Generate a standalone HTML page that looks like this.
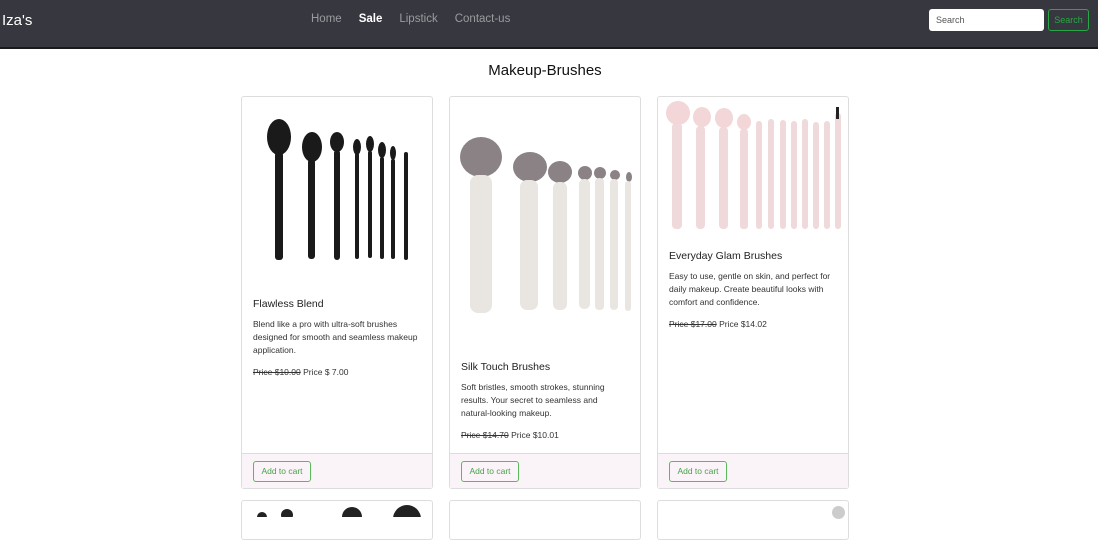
<!DOCTYPE html>
<html><head><style>
*{box-sizing:border-box;margin:0;padding:0}
body{width:1100px;height:516px;overflow:hidden;background:#fff;font-family:"Liberation Sans",sans-serif;color:#212529;position:relative}
.nav{position:absolute;left:0;top:0;width:1098px;height:49px;background:#37383f;border-bottom:2px solid #1a1a1a}
.brand{position:absolute;left:2px;top:12px;color:#fff;font-size:15px}
.links{position:absolute;left:311px;top:13px;font-size:11.5px;color:#9a9ba0}
.links span{margin-right:17px}
.links .a{color:#fff;font-weight:bold}
.srch{position:absolute;left:929px;top:9px;width:115px;height:22px;background:#fff;border-radius:3px;font-size:9px;color:#555;padding:6px 7px}
.btn{position:absolute;left:1048px;top:9px;width:41px;height:22px;border:1px solid #28a745;border-radius:3px;color:#28a745;font-size:9px;text-align:center;line-height:20px}
h1{position:absolute;left:0;width:1090px;top:62px;text-align:center;font-size:15px;font-weight:normal;color:#111}
.card{position:absolute;width:192px;border:1px solid #ddd;border-radius:3px;background:#fff}
.card .t{position:absolute;left:11px;font-size:10.5px;color:#222}
.card .d{position:absolute;left:11px;width:170px;font-size:8.5px;line-height:13px;color:#333}
.card .p{position:absolute;left:11px;font-size:8.5px;color:#333}
.ft{position:absolute;left:0;right:0;bottom:0;height:35px;background:#faf4f8;border-top:1px solid #ddd}
.ac{position:absolute;left:11px;top:7px;width:58px;height:21px;border:1px solid #5cb85c;border-radius:3px;color:#4a9f4a;font-size:8.5px;text-align:center;line-height:19px}
</style></head><body>
<div class="nav"><div class="brand">Iza's</div>
<div class="links"><span>Home</span><span class="a">Sale</span><span>Lipstick</span><span>Contact-us</span></div>
<div class="srch">Search</div><div class="btn">Search</div></div>
<h1>Makeup-Brushes</h1>

<div class="card" style="left:241px;top:96px;height:393px">
<svg style="position:absolute;left:15px;top:20px" width="160" height="150">
<g fill="#1a1a1a">
<ellipse cx="22" cy="20" rx="12" ry="18"/><rect x="18" y="35" width="8" height="108" rx="3"/>
<ellipse cx="55" cy="30" rx="10" ry="15"/><rect x="51" y="42" width="7" height="100" rx="3"/>
<ellipse cx="80" cy="25" rx="7" ry="10"/><rect x="77" y="33" width="6" height="110" rx="3"/>
<ellipse cx="100" cy="30" rx="4" ry="8"/><rect x="98" y="36" width="4" height="106" rx="2"/>
<ellipse cx="113" cy="27" rx="4" ry="8"/><rect x="111" y="34" width="4" height="107" rx="2"/>
<ellipse cx="125" cy="33" rx="4" ry="8"/><rect x="123" y="40" width="4" height="102" rx="2"/>
<ellipse cx="136" cy="36" rx="3" ry="7"/><rect x="134" y="42" width="4" height="100" rx="2"/>
<rect x="147" y="35" width="4" height="108" rx="2"/></g></svg>
<div class="t" style="top:201px">Flawless Blend</div>
<div class="d" style="top:221px">Blend like a pro with ultra-soft brushes designed for smooth and seamless makeup application.</div>
<div class="p" style="top:270px"><s>Price $10.00</s> Price $ 7.00</div>
<div class="ft"><div class="ac">Add to cart</div></div></div>

<div class="card" style="left:449px;top:96px;height:393px">
<svg style="position:absolute;left:8px;top:38px" width="180" height="180">
<g fill="#8a8285"><ellipse cx="23" cy="22" rx="21" ry="20"/><ellipse cx="72" cy="32" rx="17" ry="15"/><ellipse cx="102" cy="37" rx="12" ry="11"/><ellipse cx="127" cy="38" rx="7" ry="7"/><ellipse cx="142" cy="38" rx="6" ry="6"/><ellipse cx="157" cy="40" rx="5" ry="5"/><ellipse cx="171" cy="42" rx="3" ry="5"/></g>
<g fill="#e9e6e2"><rect x="12" y="40" width="22" height="138" rx="8"/><rect x="62" y="45" width="18" height="130" rx="7"/><rect x="95" y="47" width="14" height="128" rx="6"/><rect x="121" y="44" width="11" height="130" rx="5"/><rect x="137" y="43" width="9" height="132" rx="4"/><rect x="152" y="44" width="8" height="131" rx="4"/><rect x="167" y="46" width="6" height="130" rx="3"/></g></svg>
<div class="t" style="top:264px">Silk Touch Brushes</div>
<div class="d" style="top:284px;width:160px">Soft bristles, smooth strokes, stunning results. Your secret to seamless and natural-looking makeup.</div>
<div class="p" style="top:333px"><s>Price $14.70</s> Price $10.01</div>
<div class="ft"><div class="ac">Add to cart</div></div></div>

<div class="card" style="left:657px;top:96px;height:393px">
<svg style="position:absolute;left:6px;top:4px" width="182" height="132">
<g fill="#f2d6d8"><ellipse cx="14" cy="12" rx="12" ry="12"/><ellipse cx="38" cy="16" rx="9" ry="10"/><ellipse cx="60" cy="17" rx="9" ry="10"/><ellipse cx="80" cy="21" rx="7" ry="8"/></g>
<g fill="#efd9da"><rect x="8" y="22" width="10" height="106" rx="4"/><rect x="32" y="25" width="9" height="103" rx="4"/><rect x="55" y="26" width="9" height="102" rx="4"/><rect x="76" y="28" width="8" height="100" rx="3"/>
<rect x="92" y="20" width="6" height="108" rx="3"/><rect x="104" y="18" width="6" height="110" rx="3"/><rect x="116" y="19" width="6" height="109" rx="3"/><rect x="127" y="20" width="6" height="108" rx="3"/><rect x="138" y="18" width="6" height="110" rx="3"/><rect x="149" y="21" width="6" height="107" rx="3"/><rect x="160" y="20" width="6" height="108" rx="3"/><rect x="171" y="12" width="6" height="116" rx="3"/></g>
<rect x="172" y="6" width="3" height="12" fill="#222"/></svg>
<div class="t" style="top:153px">Everyday Glam Brushes</div>
<div class="d" style="top:173px">Easy to use, gentle on skin, and perfect for daily makeup. Create beautiful looks with comfort and confidence.</div>
<div class="p" style="top:222px"><s>Price $17.00</s> Price $14.02</div>
<div class="ft"><div class="ac">Add to cart</div></div></div>

<div class="card" style="left:241px;top:500px;height:40px"><svg width="190" height="16"><g fill="#222"><circle cx="20" cy="16" r="5"/><circle cx="45" cy="14" r="6"/><circle cx="110" cy="16" r="10"/><circle cx="165" cy="18" r="14"/></g></svg></div>
<div class="card" style="left:449px;top:500px;height:40px"></div>
<div class="card" style="left:657px;top:500px;height:40px"><div style="position:absolute;left:174px;top:5px;width:13px;height:13px;border-radius:50%;background:#ccc"></div></div>
</body></html>
